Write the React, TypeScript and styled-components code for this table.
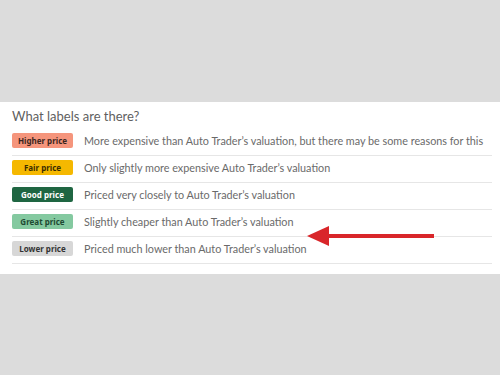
import styled, { createGlobalStyle } from "styled-components";

const GlobalStyle = createGlobalStyle`
  html, body {
    margin: 0;
    padding: 0;
    background: #dcdcdc;
    font-family: Lato, "Noto Sans", "Liberation Sans", Arial, sans-serif;
  }
`;

const Page = styled.div`
  width: 500px;
  height: 375px;
  display: flex;
  flex-direction: column;
  justify-content: flex-start;
  padding-top: 102px;
  box-sizing: border-box;
`;

const Panel = styled.div`
  background: #ffffff;
  height: 172px;
  box-sizing: border-box;
  padding: 6px 8px 0 12px;
  position: relative;
`;

const Heading = styled.div`
  font-size: 13px;
  color: #5f5f5f;
  height: 21px;
  line-height: 16px;
`;

const Row = styled.div`
  display: flex;
  align-items: center;
  gap: 11px;
  height: 27px;
  box-sizing: border-box;
  padding-bottom: 3px;
  border-bottom: 1px solid #e6e6e6;
`;

type Tone = "higher" | "fair" | "good" | "great" | "lower";

const tones: Record<Tone, { bg: string; fg: string }> = {
  higher: { bg: "#f5957c", fg: "#3a2620" },
  fair: { bg: "#f5b800", fg: "#3a2d00" },
  good: { bg: "#1f6642", fg: "#ffffff" },
  great: { bg: "#84c9a0", fg: "#1e4a33" },
  lower: { bg: "#d7d7d7", fg: "#333333" },
};

const Badge = styled.span<{ $tone: Tone }>`
  width: 61px;
  height: 15px;
  flex: none;
  display: flex;
  align-items: center;
  justify-content: center;
  border-radius: 2px;
  font-family: "Noto Sans", "Liberation Sans", Arial, sans-serif;
  font-size: 8px;
  font-weight: 700;
  background: ${(p) => tones[p.$tone].bg};
  color: ${(p) => tones[p.$tone].fg};
`;

const Desc = styled.span`
  font-size: 10.8px;
  color: #6a6a6a;
  white-space: nowrap;
`;

const Arrow = styled.svg`
  position: absolute;
  left: 306px;
  top: 123px;
  width: 130px;
  height: 22px;
`;

const rows: { tone: Tone; label: string; text: string }[] = [
  {
    tone: "higher",
    label: "Higher price",
    text: "More expensive than Auto Trader’s valuation, but there may be some reasons for this",
  },
  { tone: "fair", label: "Fair price", text: "Only slightly more expensive Auto Trader’s valuation" },
  { tone: "good", label: "Good price", text: "Priced very closely to Auto Trader’s valuation" },
  { tone: "great", label: "Great price", text: "Slightly cheaper than Auto Trader’s valuation" },
  { tone: "lower", label: "Lower price", text: "Priced much lower than Auto Trader’s valuation" },
];

export default function App() {
  return (
    <Page>
      <GlobalStyle />
      <Panel>
        <Heading>What labels are there?</Heading>
        {rows.map((r) => (
          <Row key={r.tone}>
            <Badge $tone={r.tone}>{r.label}</Badge>
            <Desc>{r.text}</Desc>
          </Row>
        ))}
        <Arrow viewBox="0 0 130 22">
          <polygon points="1,11 23,1 23,21" fill="#d9262a" />
          <rect x="22" y="9" width="106" height="4" fill="#d9262a" />
        </Arrow>
      </Panel>
    </Page>
  );
}
